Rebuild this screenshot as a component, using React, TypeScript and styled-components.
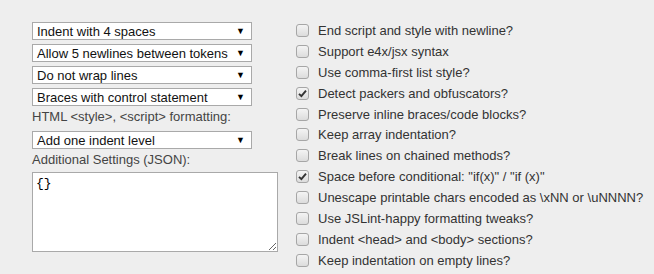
import React from "react";
import styled, { createGlobalStyle } from "styled-components";

const GlobalStyle = createGlobalStyle`
   body {
      margin: 0;
      background: #eeeeee;
      font-family: "Liberation Sans", Arial, sans-serif;
      color: #333333;
   }
`;

const selects = [
   "Indent with 4 spaces",
   "Allow 5 newlines between tokens",
   "Do not wrap lines",
   "Braces with control statement",
];

const options = [
   { label: "End script and style with newline?", checked: false },
   { label: "Support e4x/jsx syntax", checked: false },
   { label: "Use comma-first list style?", checked: false },
   { label: "Detect packers and obfuscators?", checked: true },
   { label: "Preserve inline braces/code blocks?", checked: false },
   { label: "Keep array indentation?", checked: false },
   { label: "Break lines on chained methods?", checked: false },
   { label: 'Space before conditional: "if(x)" / "if (x)"', checked: true },
   { label: "Unescape printable chars encoded as \\xNN or \\uNNNN?", checked: false },
   { label: "Use JSLint-happy formatting tweaks?", checked: false },
   { label: "Indent <head> and <body> sections?", checked: false },
   { label: "Keep indentation on empty lines?", checked: false },
];

const Dropdown = ({ value }: { value: string }) => (
   <Select>
      <span>{value}</span>
      <Arrow>▼</Arrow>
   </Select>
);

const App = () => {
   return (
      <>
         <GlobalStyle />
         <Page>
            <LeftCol>
               {selects.map((s, key) => (
                  <Dropdown key={key} value={s} />
               ))}
               <Label>HTML &lt;style&gt;, &lt;script&gt; formatting:</Label>
               <Dropdown value="Add one indent level" />
               <Label>Additional Settings (JSON):</Label>
               <Json defaultValue="{}" spellCheck={false} />
            </LeftCol>

            <RightCol>
               {options.map((opt, key) => (
                  <Option key={key}>
                     <Box>
                        {opt.checked && (
                           <svg width="9" height="9" viewBox="0 0 9 9">
                              <path
                                 d="M1 4.8 L3.4 7.2 L8 1.6"
                                 fill="none"
                                 stroke="#333"
                                 strokeWidth="1.9"
                              />
                           </svg>
                        )}
                     </Box>
                     {opt.label}
                  </Option>
               ))}
            </RightCol>
         </Page>
      </>
   );
};

const Page = styled.div`
   display: flex;
   padding: 20px 0 0 32px;
   width: 654px;
   height: 274px;
   box-sizing: border-box;
`;

const LeftCol = styled.div`
   display: flex;
   flex-direction: column;
   width: 246px;
`;

const Select = styled.div`
   display: flex;
   align-items: center;
   justify-content: space-between;
   box-sizing: border-box;
   width: 220px;
   height: 18px;
   margin: 2px 0;
   padding: 0 6px 0 4px;
   background: #fff;
   border: 1px solid #a9a9a9;
   font-size: 13px;
   color: #111;
   white-space: nowrap;
`;

const Arrow = styled.span`
   font-size: 9px;
   color: #000;
`;

const Label = styled.div`
   font-size: 13px;
   line-height: 17px;
   margin: 0 0 4px;
   color: #444;
`;

const Json = styled.textarea`
   box-sizing: border-box;
   width: 246px;
   height: 80px;
   margin: 0;
   padding: 3px 3px;
   border: 1px solid #a9a9a9;
   background: #fff;
   font-family: "Liberation Mono", "Courier New", monospace;
   font-size: 13px;
   color: #000;
   resize: both;
   outline: none;
`;

const RightCol = styled.div`
   display: flex;
   flex-direction: column;
   margin-left: 18px;
   padding-top: 0;
`;

const Option = styled.label`
   display: flex;
   align-items: center;
   height: 20.9px;
   font-size: 13px;
   color: #333;
   white-space: nowrap;
`;

const Box = styled.span`
   display: inline-flex;
   align-items: center;
   justify-content: center;
   box-sizing: border-box;
   width: 13px;
   height: 13px;
   margin-right: 9px;
   border: 1px solid #a6a6a6;
   border-radius: 3px;
   background: linear-gradient(#f4f4f4, #dcdcdc);
`;

export default App;
